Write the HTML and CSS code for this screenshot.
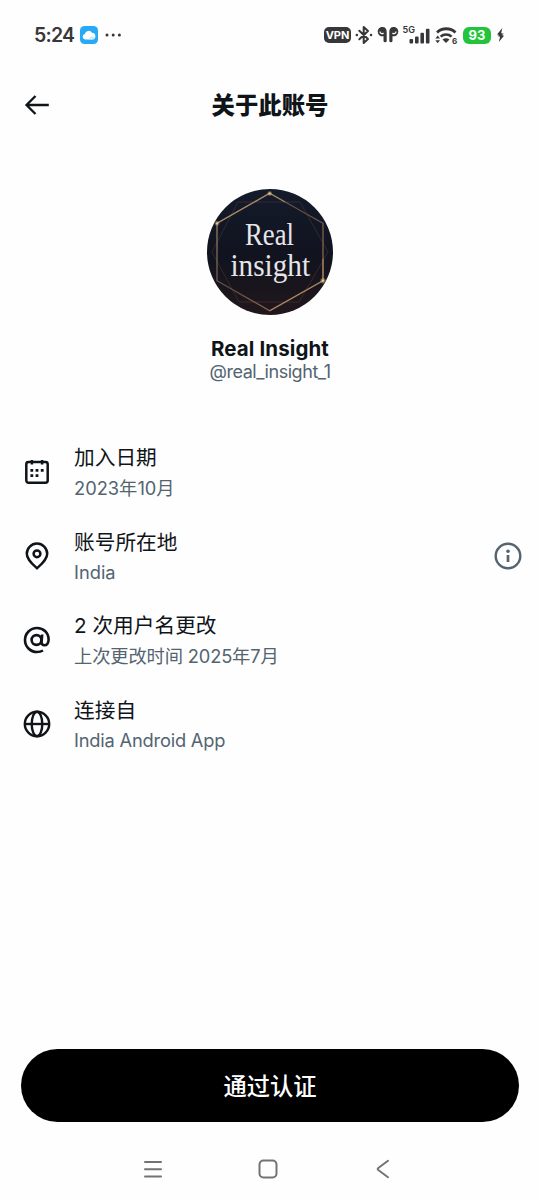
FILE: index.html
```html
<!DOCTYPE html>
<html lang="zh-CN">
<head>
<meta charset="utf-8">
<title>关于此账号</title>
<link rel="stylesheet" href="styles.css">
</head>
<body>
<div class="screen">
  <div class="status">
    <span class="time">5:24</span>
    <svg class="cloud" width="18" height="18" viewBox="0 0 18 18"><rect width="18" height="18" rx="4.5" fill="#27a9f5"/><path d="M5 13.500a2.800 2.800 0 0 1-.2-5.500 3.900 3.900 0 0 1 7.200-1.200 3.400 3.400 0 0 1 .8 6.700z" fill="#fff"/><path d="M9 13.500a3 3 0 0 1 2.500-3 3 3 0 0 1 3 .8 1.800 1.800 0 0 1-1.700 2.200z" fill="#cdeafd"/></svg>
    <svg class="dots" width="18" height="6" viewBox="0 0 18 6" fill="#37373a"><circle cx="3" cy="3" r="1.500"/><circle cx="9.200" cy="3" r="1.500"/><circle cx="15.400" cy="3" r="1.500"/></svg>
    <div class="signals">
      <span class="vpn">VPN</span>
      <svg class="bt" width="18" height="20" viewBox="0 0 18 20" fill="none" stroke="#37373a" stroke-width="2" stroke-linejoin="round" stroke-linecap="round"><path d="M4.300 5.700 13 14l-4.300 4V2L13 6l-8.700 8.300"/><path d="M1.800 10h.1M16 10h.1" stroke-width="2.400"/></svg>
      <svg class="buds" width="22" height="20" viewBox="0 0 22 20" fill="#37373a"><path d="M5.500 2C8.500 2 9.700 4 9.700 7v8.700a1.600 1.600 0 0 1-3.200 0V11.200A4.700 4.700 0 0 1 .7 6.800C.7 3.900 2.800 2 5.500 2z"/><path d="M16.500 2c-3 0-4.200 2-4.200 5v8.700a1.600 1.600 0 0 0 3.200 0V11.200a4.700 4.700 0 0 0 5.800-4.400C21.300 3.900 19.200 2 16.500 2z"/><g fill="none" stroke="#fefefe" stroke-width="1.200"><path d="M3 6.500a2 2 0 0 0 3.500 1.500M19 6.500A2 2 0 0 1 15.500 8"/></g></svg>
      <svg class="bars" width="29" height="22" viewBox="0 0 29 22" fill="#37373a"><text class="net" x="0.500" y="8.500" textLength="12.500" lengthAdjust="spacingAndGlyphs">5G</text><rect x="7.500" y="15" width="3.600" height="4.600" rx="1"/><rect x="13" y="12.500" width="3.600" height="7.100" rx="1"/><rect x="18.400" y="8.700" width="3.600" height="10.900" rx="1"/><rect x="23.900" y="4.700" width="3.600" height="14.900" rx="1"/></svg>
      <svg class="wifi" width="24" height="20" viewBox="0 0 24 20" fill="none" stroke="#37373a"><path d="M2 7.400a13.500 13.500 0 0 1 18.500 0" stroke-width="2.800"/><path d="M5.600 11.600a8.300 8.300 0 0 1 11 0" stroke-width="2.600"/><path d="M7.500 14.400q3.500-2.500 7 0L11 18z" fill="#37373a" stroke="none"/><path d="M2.700 10.600.4 13.600H5zM2.700 18.200.4 15.200H5z" fill="#37373a" stroke="none"/><text class="six" x="17" y="18.500">6</text></svg>
      <span class="battery">93</span>
      <svg class="bolt" width="9" height="16" viewBox="0 0 9 16" fill="#37373a"><path d="M6.300 1 1 7.500l2.500.6-2 .9 2.600.8L2.800 15 8 8.700l-2.300-.6L8 6.800 5.200 6.300z"/></svg>
    </div>
  </div>
  <header class="header">
    <svg class="back" width="26" height="22" viewBox="0 0 26 22" fill="none" stroke="#0f1419" stroke-width="2.300"><path d="M2.500 11h22.300M11.500 2 2.500 11l9 9"/></svg>
    <h1 class="title">关于此账号</h1>
  </header>
  <section class="profile">
    <svg class="avatar" width="126" height="126" viewBox="0 0 126 126">
      <defs>
        <clipPath id="round"><circle cx="63" cy="63" r="63"/></clipPath>
        <linearGradient id="night" x1="0" y1="0" x2="0" y2="1"><stop offset="0" stop-color="#141b2b"/><stop offset=".55" stop-color="#11131e"/><stop offset="1" stop-color="#21171c"/></linearGradient>
        <linearGradient id="gold" x1="0" y1="0" x2="1" y2="1"><stop offset="0" stop-color="#b09272"/><stop offset=".45" stop-color="#5f4e42"/><stop offset=".85" stop-color="#94704f"/><stop offset="1" stop-color="#65472f"/></linearGradient>
        <radialGradient id="glow"><stop offset="0" stop-color="#ffe3ad"/><stop offset="1" stop-color="#c48d50" stop-opacity="0"/></radialGradient>
      </defs>
      <g clip-path="url(#round)">
        <rect width="126" height="126" fill="url(#night)"/>
        <path d="M31 13h62l28 50-29 50H32L5 63z" fill="none" stroke="#80624b" stroke-width=".8" opacity=".35"/>
        <path d="M62.700 4.300 116 34.300v57.400l-53.300 30L10 91.700V34.300z" fill="none" stroke="url(#gold)" stroke-width="1.300"/>
        <path d="M10 34.300 62.700 4.300 78 13M62.700 121.700 116 91.700V70" fill="none" stroke="#b08e6a" stroke-width="1.200" opacity=".75"/>
        <circle cx="62.700" cy="4.500" r="3" fill="url(#glow)"/><circle cx="10" cy="34.300" r="3" fill="url(#glow)"/><circle cx="116" cy="91.700" r="3.500" fill="url(#glow)"/>
      </g>
      <text class="mark" x="38" y="56" textLength="49" lengthAdjust="spacingAndGlyphs">Real</text>
      <text class="mark" x="23.500" y="86.500" textLength="79.500" lengthAdjust="spacingAndGlyphs">insight</text>
    </svg>
    <div class="name">Real Insight</div>
    <div class="handle">@real_insight_1</div>
  </section>
  <main class="facts">
    <div class="fact">
      <svg class="icon" width="30" height="30" viewBox="0 0 30 30" fill="none" stroke="#0f1419" stroke-width="2.500"><rect x="4.300" y="5.100" width="21.400" height="20.600" rx="2.200"/><path d="M9.900 3v4.500M20.100 3v4.500"/><path d="M8.400 13.400h2.800M13.600 13.400h2.800M18.800 13.400h2.800M8.400 18.600h2.800M13.600 18.600h2.800" stroke-width="2.800"/></svg>
      <div class="text"><div class="label">加入日期</div><div class="value">2023年10月</div></div>
    </div>
    <div class="fact">
      <svg class="icon" width="30" height="30" viewBox="0 0 30 30" fill="none" stroke="#0f1419" stroke-width="2.500"><path d="M15 27.200C11.300 24 4.800 19 4.800 12.800a10.200 10.200 0 0 1 20.400 0C25.200 19 18.700 24 15 27.200z"/><circle cx="15" cy="12.800" r="3.400"/></svg>
      <div class="text"><div class="label low">账号所在地</div><div class="value">India</div></div>
      <svg class="info" width="28" height="28" viewBox="0 0 28 28" fill="none" stroke="#536471"><circle cx="14" cy="14" r="12.300" stroke-width="2.400"/><path d="M14 13v7" stroke-width="2.700"/><circle cx="14" cy="9.300" r="1.800" fill="#536471" stroke="none"/></svg>
    </div>
    <div class="fact">
      <svg class="icon" width="30" height="30" viewBox="0 0 30 30" fill="none" stroke="#0f1419" stroke-width="2.600"><circle cx="14.500" cy="15" r="4.900"/><path d="M20.200 9.500l-.6 7.100c-.2 2.400 1 3.700 2.800 3.700 2.600 0 4.200-2.500 4.200-5.700C26.600 7.800 21.600 3 15 3S3 8.300 3 15s5.300 12 12 12c2.300 0 4.300-.5 6-1.500"/></svg>
      <div class="text"><div class="label">2 次用户名更改</div><div class="value changed">上次更改时间 2025年7月</div></div>
    </div>
    <div class="fact">
      <svg class="icon" width="30" height="30" viewBox="0 0 30 30" fill="none" stroke="#0f1419" stroke-width="2.400"><circle cx="15" cy="15" r="12.200"/><ellipse cx="15" cy="15" rx="5.300" ry="12.200"/><path d="M2.700 15h24.600"/></svg>
      <div class="text"><div class="label low">连接自</div><div class="value app">India Android App</div></div>
    </div>
  </main>
  <button class="verify">通过认证</button>
  <nav class="nav">
    <svg width="20" height="20" viewBox="0 0 20 20" fill="none" stroke="#737373" stroke-width="2" stroke-linecap="round"><path d="M2 3h16M2 10.200h16M2 17.400h16"/></svg>
    <svg width="20" height="20" viewBox="0 0 20 20" fill="none" stroke="#737373" stroke-width="2"><rect x="1.500" y="1.500" width="17" height="17" rx="4"/></svg>
    <svg width="20" height="20" viewBox="0 0 20 20" fill="none" stroke="#737373" stroke-width="2" stroke-linecap="round" stroke-linejoin="round"><path d="M15 1.800 5.300 9q-1.200 1 0 2L15 18.200"/></svg>
  </nav>
</div>
</body>
</html>
```
FILE: styles.css
```css
* { box-sizing: border-box; }
body { margin: 0; background: #fff; }
.screen {
  width: 540px;
  height: 1200px;
  display: flex;
  flex-direction: column;
  background: #fefefe;
  color: #0f1419;
  font-family: Inter, "Noto Sans CJK SC", sans-serif;
}
svg { display: block; flex: none; }
.status { height: 70px; display: flex; align-items: center; padding: 0 35px 0 34px; color: #37373a; }
.time { width: 39px; font-size: 19.500px; font-weight: 600; letter-spacing: -0.8px; white-space: nowrap; }
.cloud { margin-left: 7px; }
.dots { margin-left: 6px; }
.signals { display: flex; align-items: center; margin-left: auto; }
.vpn { width: 27px; height: 16px; border-radius: 5px; background: #37373a; color: #fff; font-size: 11px; line-height: 16px; font-weight: 700; text-align: center; }
.bt { margin-left: 4px; }
.buds { margin-left: 4px; }
.bars { margin-left: 3px; }
.wifi { margin-left: 4px; }
.net { font-size: 9px; font-weight: 600; }
.six { font-size: 8px; font-weight: 700; fill: #37373a; stroke: none; }
.battery { width: 28px; height: 17px; margin-left: 4px; border-radius: 6px; background: #22c53a; color: #fff; font-size: 13px; line-height: 17px; font-weight: 700; text-align: center; }
.bolt { margin-left: 5px; }
.header { height: 70px; display: grid; grid-template-columns: 26px 1fr 26px; align-items: center; padding: 0 24px; }
.title { margin: 0; padding-top: 2px; font-size: 23.400px; line-height: 30px; font-weight: 900; text-align: center; }
.profile { display: flex; flex-direction: column; align-items: center; height: 290px; padding-top: 49px; }
.mark { font-family: "Liberation Serif", serif; font-size: 31px; fill: #e6e6ea; }
.name { margin-top: 21px; font-size: 20.500px; line-height: 26px; font-weight: 700; letter-spacing: 0.1px; }
.handle { font-size: 18px; line-height: 20px; letter-spacing: -0.450px; color: #536471; }
.facts { flex: 1; padding: 0 18px 0 22px; }
.fact { height: 84px; display: flex; align-items: center; }
.text { flex: 1; margin-left: 22px; }
.label { padding-top: 2px; font-size: 20.700px; line-height: 30px; white-space: nowrap; }
.label.low { padding-top: 4px; line-height: 28px; }
.low { height: 32px; }
.value { font-size: 18.300px; line-height: 30px; color: #536471; white-space: nowrap; }
.changed { letter-spacing: -0.150px; }
.app { letter-spacing: -0.200px; }
.verify { width: 498px; height: 73px; margin: 0 21px; padding: 0 0 2px; border: 0; border-radius: 37px; background: #000; color: #fff; font: 500 23.300px "Noto Sans CJK SC", sans-serif; }
.nav { height: 78px; display: flex; justify-content: center; align-items: center; gap: 95px; padding: 15px 4px 0 0; }
```
